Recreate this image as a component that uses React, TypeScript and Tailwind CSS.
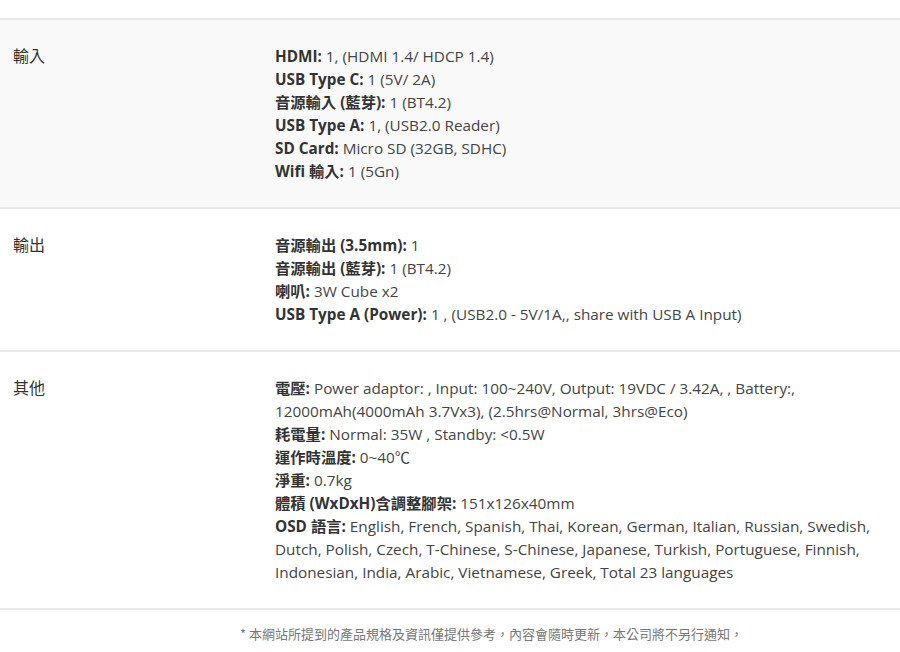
const font = { fontFamily: '"Open Sans", "Noto Sans CJK TC", sans-serif' };

type Item = { k: string; v: string };

const rows: { label: string; items: Item[]; shade?: boolean }[] = [
  {
    label: "輸入",
    shade: true,
    items: [
      { k: "HDMI:", v: " 1, (HDMI 1.4/ HDCP 1.4)" },
      { k: "USB Type C:", v: " 1 (5V/ 2A)" },
      { k: "音源輸入 (藍芽):", v: " 1 (BT4.2)" },
      { k: "USB Type A:", v: " 1, (USB2.0 Reader)" },
      { k: "SD Card:", v: " Micro SD (32GB, SDHC)" },
      { k: "Wifi 輸入:", v: " 1 (5Gn)" },
    ],
  },
  {
    label: "輸出",
    items: [
      { k: "音源輸出 (3.5mm):", v: " 1" },
      { k: "音源輸出 (藍芽):", v: " 1 (BT4.2)" },
      { k: "喇叭:", v: " 3W Cube x2" },
      { k: "USB Type A (Power):", v: " 1 , (USB2.0 - 5V/1A,, share with USB A Input)" },
    ],
  },
  {
    label: "其他",
    items: [
      {
        k: "電壓:",
        v: " Power adaptor: , Input: 100~240V, Output: 19VDC / 3.42A, , Battery:, 12000mAh(4000mAh 3.7Vx3), (2.5hrs@Normal, 3hrs@Eco)",
      },
      { k: "耗電量:", v: " Normal: 35W , Standby: <0.5W" },
      { k: "運作時溫度:", v: " 0~40℃" },
      { k: "淨重:", v: " 0.7kg" },
      { k: "體積 (WxDxH)含調整腳架:", v: " 151x126x40mm" },
      {
        k: "OSD 語言:",
        v: " English, French, Spanish, Thai, Korean, German, Italian, Russian, Swedish, Dutch, Polish, Czech, T-Chinese, S-Chinese, Japanese, Turkish, Portuguese, Finnish, Indonesian, India, Arabic, Vietnamese, Greek, Total 23 languages",
      },
    ],
  },
];

export default function App() {
  return (
    <div className="w-[900px] h-[652px] bg-white overflow-hidden pt-[18px]" style={font}>
      <div className="border-t-2 border-[#e8e8e8]">
        {rows.map((r) => (
          <div
            key={r.label}
            className={`flex border-b-2 border-[#e8e8e8] pt-[25px] pb-[24px] ${r.shade ? "bg-[#f9f9f9]" : "bg-white"}`}
          >
            <div className="w-[275px] shrink-0 pl-[13px] text-[16px] leading-[23px] text-[#333]">{r.label}</div>
            <div className="w-[610px] text-[15.3px] leading-[23px] text-[#444]">
              {r.items.map((it) => (
                <div key={it.k}>
                  <span className="font-bold text-[#333]">{it.k}</span>
                  {it.v}
                </div>
              ))}
            </div>
          </div>
        ))}
      </div>
      <div
        className="pl-[240px] pt-[15px] text-[13px] leading-[18px] text-[#777]"
        style={{ fontFamily: '"Noto Sans CJK TC", sans-serif' }}
      >
        * 本網站所提到的產品規格及資訊僅提供參考，內容會隨時更新，本公司將不另行通知，
      </div>
    </div>
  );
}
